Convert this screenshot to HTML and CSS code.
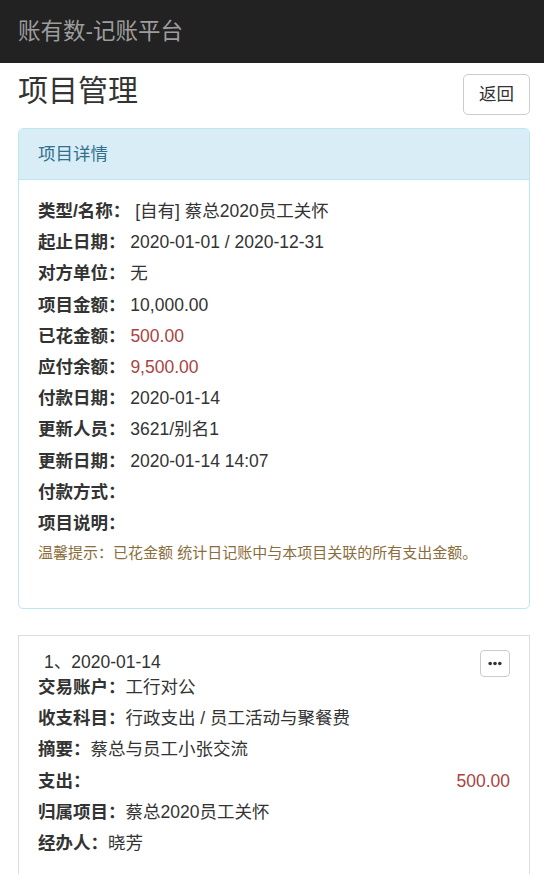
FILE: index.html
```html
<!DOCTYPE html>
<html lang="zh-CN">
<head>
<meta charset="utf-8">
<title>项目管理</title>
<link rel="stylesheet" href="styles.css">
</head>
<body>
<nav class="navbar"><span class="brand">账有数-记账平台</span></nav>
<main class="container">
  <div class="page-head">
    <h1 class="title">项目管理</h1>
    <button class="btn">返回</button>
  </div>
  <section class="panel panel-info">
    <div class="panel-heading">项目详情</div>
    <div class="panel-body">
      <div class="row"><b>类型/名称：</b> [自有] 蔡总2020员工关怀</div>
      <div class="row"><b>起止日期：</b> 2020-01-01 / 2020-12-31</div>
      <div class="row"><b>对方单位：</b> 无</div>
      <div class="row"><b>项目金额：</b> 10,000.00</div>
      <div class="row"><b>已花金额：</b> <span class="red">500.00</span></div>
      <div class="row"><b>应付余额：</b> <span class="red">9,500.00</span></div>
      <div class="row"><b>付款日期：</b> 2020-01-14</div>
      <div class="row"><b>更新人员：</b> 3621/别名1</div>
      <div class="row"><b>更新日期：</b> 2020-01-14 14:07</div>
      <div class="row"><b>付款方式：</b></div>
      <div class="row"><b>项目说明：</b></div>
      <p class="tip">温馨提示：已花金额 统计日记账中与本项目关联的所有支出金额。</p>
    </div>
  </section>
  <section class="panel panel-default">
    <div class="item-head">
      <span class="item-date">1、2020-01-14</span>
      <button class="btn-more" aria-label="更多"><svg width="14" height="5" viewBox="0 0 14 5"><circle cx="2.2" cy="2.5" r="1.8" fill="#333"/><circle cx="7" cy="2.5" r="1.8" fill="#333"/><circle cx="11.8" cy="2.5" r="1.8" fill="#333"/></svg></button>
    </div>
    <div class="row"><b>交易账户：</b>工行对公</div>
    <div class="row"><b>收支科目：</b>行政支出 / 员工活动与聚餐费</div>
    <div class="row"><b>摘要：</b>蔡总与员工小张交流</div>
    <div class="row split"><b>支出：</b><span class="red">500.00</span></div>
    <div class="row"><b>归属项目：</b>蔡总2020员工关怀</div>
    <div class="row"><b>经办人：</b>晓芳</div>
  </section>
</main>
</body>
</html>
```
FILE: styles.css
```css
* { box-sizing: border-box; }
html, body { margin: 0; padding: 0; }
body {
  font-family: "Liberation Sans", Arial, "Noto Sans CJK SC", sans-serif;
  font-size: 17.5px;
  line-height: 25px;
  color: #333;
  background: #fff;
}
.navbar {
  height: 63px;
  background: #222;
  display: flex;
  align-items: center;
  padding-left: 18px;
}
.brand {
  color: #9d9d9d;
  font-size: 22.5px;
  line-height: 30px;
}
.container {
  padding: 11px 14px 0 18px;
}
.page-head {
  display: flex;
  justify-content: space-between;
  align-items: flex-start;
}
.title {
  margin: 0;
  font-size: 30px;
  line-height: 33px;
  font-weight: normal;
  color: #333;
}
.btn {
  font-family: inherit;
  font-size: 17.5px;
  line-height: 23px;
  padding: 8px 15px;
  background: #fff;
  color: #333;
  border: 1px solid #ccc;
  border-radius: 5px;
}
.panel {
  border: 1px solid #ddd;
  border-radius: 5px;
  background: #fff;
}
.panel-info {
  margin-top: 13px;
  border-color: #bce8f1;
}
.panel-heading {
  background: #d9edf7;
  color: #31708f;
  border-bottom: 1px solid #bce8f1;
  padding: 12.5px 19px;
  border-radius: 4px 4px 0 0;
}
.panel-body {
  padding: 19px 19px 19px 19px;
}
.row {
  margin-bottom: 6.2px;
}
.row b { font-weight: bold; }
.red { color: #a94442; }
.tip {
  margin: 0 0 26px;
  font-size: 15px;
  line-height: 21px;
  color: #8a6d3b;
}
.panel-default {
  margin-top: 26px;
  border-radius: 0;
  padding: 14px 19px 19px 19px;
  min-height: 260px;
}
.item-head {
  display: flex;
  justify-content: space-between;
  align-items: flex-start;
  height: 25px;
}
.item-date {
  padding-left: 6px;
}
.btn-more {
  width: 30px;
  height: 27px;
  padding: 0;
  background: #fff;
  border: 1px solid #ccc;
  border-radius: 4px;
  display: flex;
  align-items: center;
  justify-content: center;
}
.btn-more svg { display: block; }
.split {
  display: flex;
  justify-content: space-between;
}
```
